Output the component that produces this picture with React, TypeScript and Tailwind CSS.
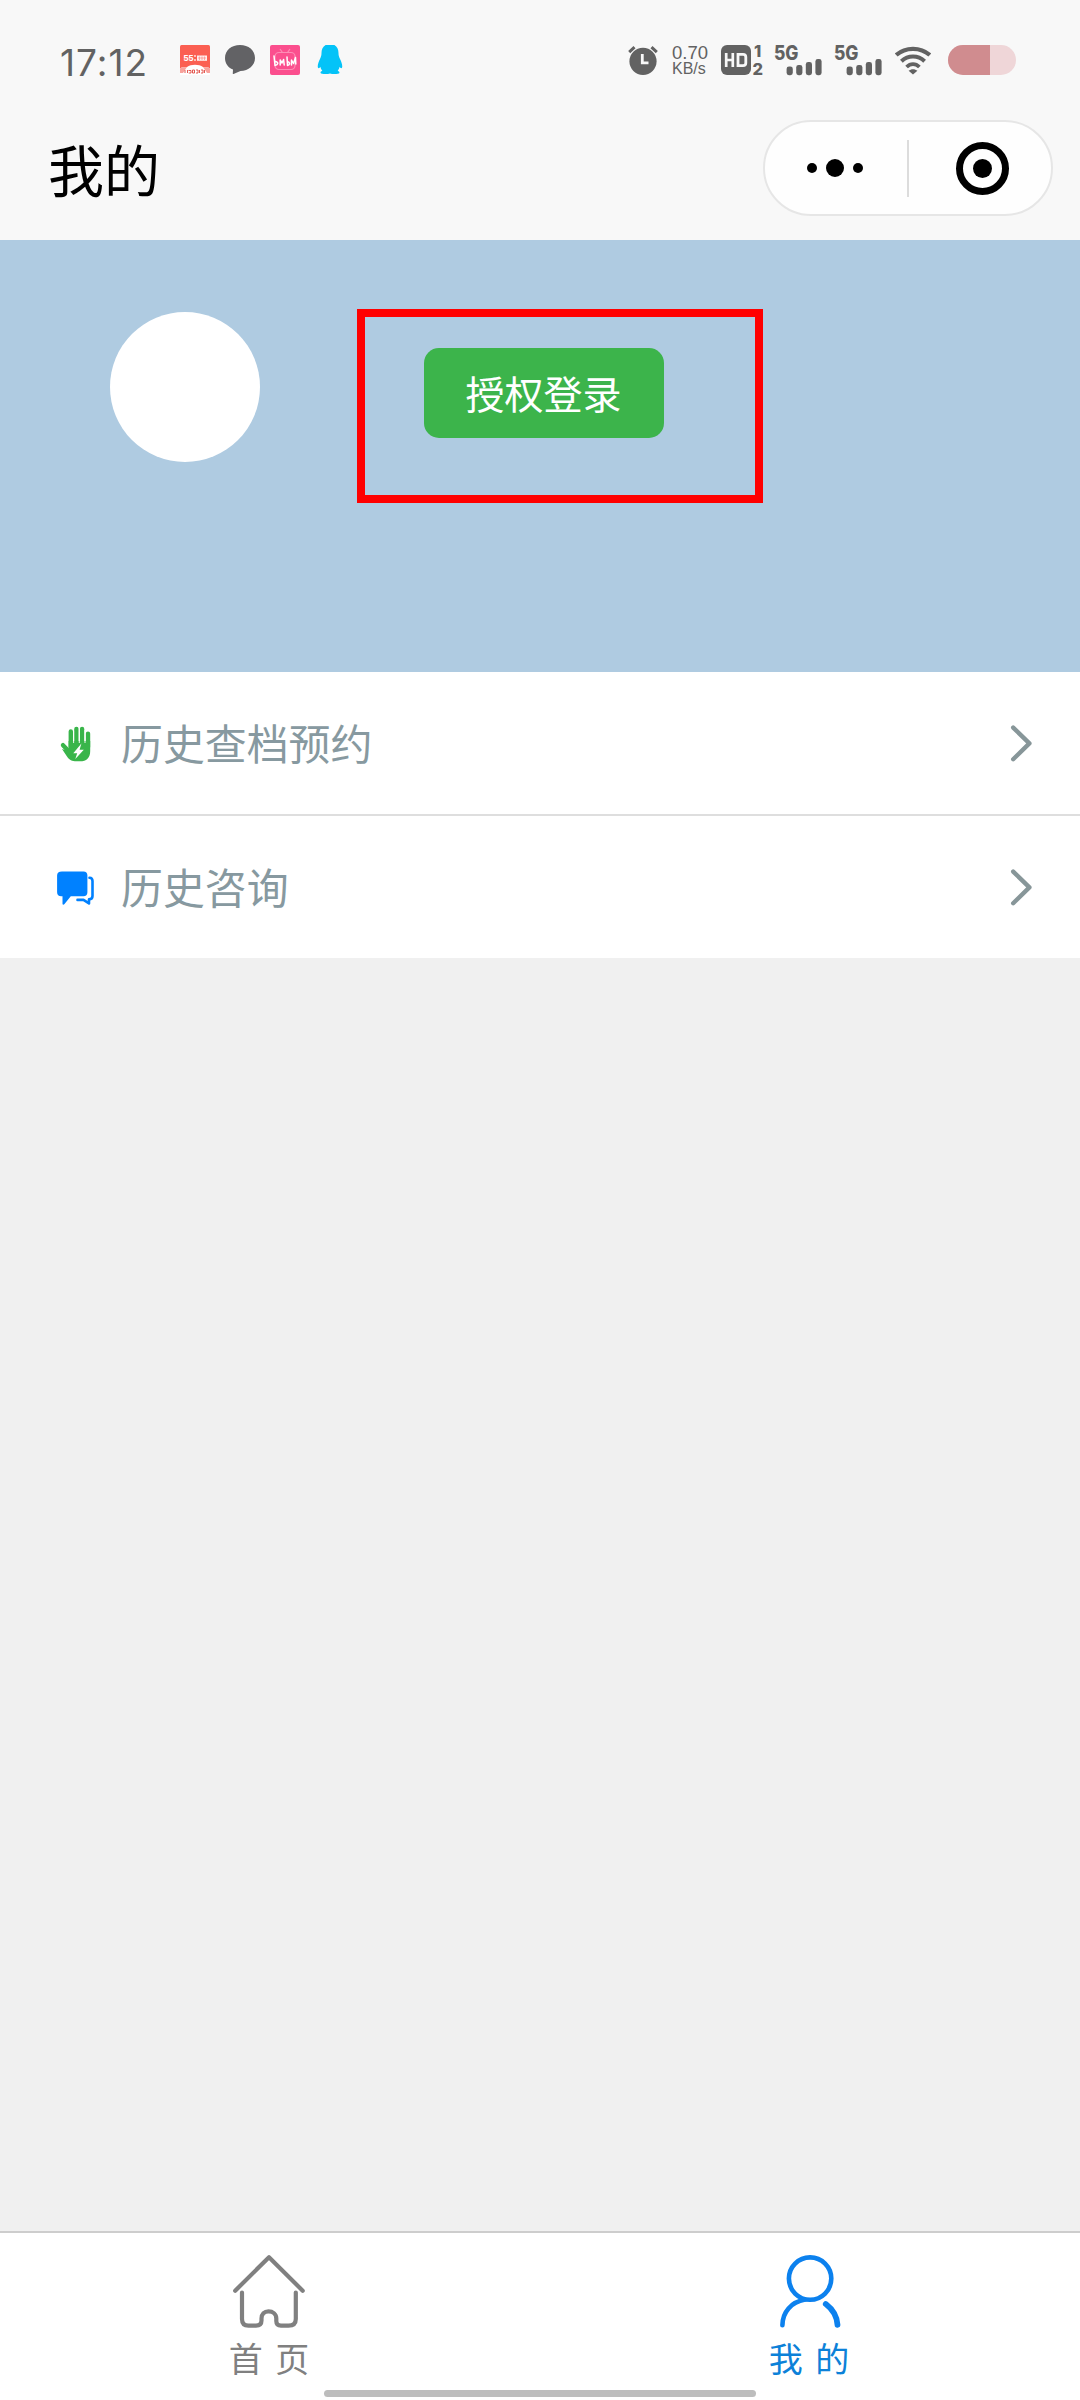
import React from 'react';

interface MenuItem {
  label: string;
  icon: React.ReactNode;
}

const HandIcon = () => (
  <svg width="40" height="40" viewBox="0 0 40 40" fill="none">
    <g stroke="#39b54a" strokeLinecap="round" strokeLinejoin="round">
      <path d="M14.8 8.5V24M20.4 6V22M26.1 6V22M32 10.6V24" strokeWidth="4.4" />
      <path d="M7 22.2L14 29.5" strokeWidth="4.4" />
    </g>
    <path d="M12.6 18H34.2V28C34.2 35 30.5 38.3 24 38.3H20.5C16 38.3 13.3 37 11 33.5L6 26L12.6 28Z" fill="#39b54a" />
    <path d="M17.6 8V20M23.3 6V20M29 7V20" stroke="#fff" strokeWidth="0.9" />
    <path d="M25.4 20.5L17.3 30.2H21.2L19.3 36L27.8 26.8H23.6Z" fill="#fff" />
  </svg>
);

const ChatIcon = () => (
  <svg width="40" height="40" viewBox="0 -1 40 40" fill="none">
    <path d="M6 3.5H27.5C30 3.5 31.4 5 31.4 7.2V24.2C31.4 26.8 30 28.3 27.5 28.3H14.8L8.3 36.2C7.5 37 6.5 36.8 6.5 35.8V28.3H5.2C2.6 28.3 1.1 26.8 1.1 24.2V7.6C1.1 5 2.6 3.5 6 3.5Z" fill="#0081ff" />
    <path d="M33.5 9.7C35.8 9.8 36.5 11 36.5 13V28C36.5 30 35.5 31.3 33 31.4V35.4L27.5 31.9H21.5" stroke="#0081ff" strokeWidth="2.6" strokeLinecap="round" strokeLinejoin="round" />
  </svg>
);

const HomeIcon = () => (
  <svg width="78" height="78" viewBox="0 0 78 78" fill="none" stroke="#808080" strokeLinecap="round" strokeLinejoin="round">
    <path d="M5.2 40.7L39 7.2L72.7 40.7" strokeWidth="4.2" />
    <path d="M12 42.5V69C12 73.5 14.3 75.6 18.5 75.6H26C29.5 75.6 31.5 73.7 31.5 70.5V68.5C31.5 64 34.3 61.3 38.5 61.3C42.7 61.3 46.3 64 46.3 68.5V71C46.3 74 48 75.6 51 75.6H58.5C63.3 75.6 65.8 73.2 65.8 69V42.5" strokeWidth="4.2" />
  </svg>
);

const UserIcon = () => (
  <svg width="78" height="78" viewBox="-1 0 78 78" fill="none" stroke="#0c81ee" strokeLinecap="round">
    <circle cx="39.1" cy="28.6" r="21.2" strokeWidth="4.6" />
    <path d="M11.4 75.2C11.6 62 20 52.2 34 49.6" strokeWidth="4.6" />
    <path d="M54.8 54C62 59.5 66 67 66.5 74.8" strokeWidth="5.8" />
  </svg>
);

const ChevronIcon = () => (
  <svg width="24" height="40" viewBox="0 -1 24 40" fill="none" stroke="#879699" strokeWidth="4.4" strokeLinecap="round" strokeLinejoin="round">
    <path d="M3.2 3.6L19.4 19.4L3.2 35.2" />
  </svg>
);

const NewsAppIcon = () => (
  <svg width="30" height="30" viewBox="0 0 30 30" className="mr-[15px]">
    <rect width="30" height="30" rx="1.5" fill="#fb5f52" />
    <path d="M0 24C2 21 5 23 7 22C11 19 19 19 23 22C25 23 28 21 30 24V30H0Z" fill="#fff" />
    <path d="M0 24C2 21 5 23 7 22L3 28H0ZM30 24C28 21 25 23 23 22L27 28H30Z" fill="#f9a29c" />
    <text x="3.5" y="16.3" fontSize="9" fontWeight="700" textLength="10" lengthAdjust="spacingAndGlyphs" fontFamily="Liberation Sans, sans-serif" fill="#fff">55</text>
    <path d="M15 10V12M15 14V16" stroke="#fff" strokeWidth="1.2" />
    <path d="M17 10.5H27V15.8H17Z" fill="#fff" opacity="0.9" />
    <path d="M18 13H26M19.5 11.5V15M22 11.5V15M24.5 11.5V15" stroke="#fb8a82" strokeWidth="0.7" />
    <path d="M5 28V25M7.5 28V25M8.5 25.5H11V28H8.7M12.5 25V28H14.5V25ZM16 25H18V28H16M19.5 25V28M21 25H23V28H21M24.5 25V28" stroke="#e04840" strokeWidth="0.9" fill="none" />
  </svg>
);

const BubbleIcon = () => (
  <svg width="30" height="30" viewBox="0 0 30 30" className="mr-[15px]">
    <path d="M15 0C23.5 0 30 5.2 30 13C30 20.5 23.5 25.7 15.5 26L8.5 29C7.8 29.2 7.6 28.8 7.8 28L8 24.5C3 22.5 0 18.5 0 13C0 5.2 6.5 0 15 0Z" fill="#626265" />
  </svg>
);

const VideoAppIcon = () => (
  <svg width="30" height="30" viewBox="0 0 30 30" className="mr-[17px]" fill="none">
    <rect width="30" height="30" rx="2" fill="#fb4f8e" />
    <path d="M10 4L12.5 7.5M20 4L17.5 7.5" stroke="#fd8db6" strokeWidth="1.2" />
    <rect x="5" y="7.5" width="20" height="17" rx="4" stroke="#fd8db6" strokeWidth="1.2" />
    <path d="M4 11L5 20.5C8 20 9 17.5 5.5 16.5M10.2 20V15L12 18L13.6 14.5L14.2 20M17 12L17.5 20.5C20 20 20.5 17.5 17.5 16.5M21.5 20V15L23.5 18.5L25.5 12.5L25.8 19" stroke="#fff" strokeWidth="1.5" strokeLinecap="round" strokeLinejoin="round" />
  </svg>
);

const PenguinIcon = () => (
  <svg width="26" height="30" viewBox="0 0 26 30">
    <path d="M13 -1C18.8 -1 21.5 3 21.5 8C21.5 10 21.8 11.5 23 14C24.5 17 25.8 20.5 25 22.7C24.4 23.8 23.2 22.8 22.6 21.8C22.2 23.5 21.7 24.5 20.7 25.7C22 26.3 22.6 27 22.4 28C22 29.3 15.5 29.5 13 28.4C10.5 29.5 4 29.3 3.6 28C3.4 27 4 26.3 5.3 25.7C4.3 24.5 3.8 23.5 3.4 21.8C2.8 22.8 1.6 23.8 1 22.7C.2 20.5 1.5 17 3 14C4.2 11.5 4.5 10 4.5 8C4.5 3 7.2 -1 13 -1Z" fill="#04c3f8" />
  </svg>
);

const AlarmIcon = () => (
  <svg width="30" height="30" viewBox="0 0 30 30" fill="none" className="mr-[14px]">
    <circle cx="15" cy="16.3" r="13.6" fill="#626262" />
    <path d="M1.2 7.2L6.5 2.2M28.8 7.2L23.5 2.2" stroke="#626262" strokeWidth="3" />
    <path d="M14.3 9V17.8H20.5" stroke="#f8f8f8" strokeWidth="2.8" />
  </svg>
);

const HdIcon = () => (
  <svg width="44" height="42" viewBox="0 -6 44 42" fill="none" className="-my-[6px] mr-[9px]">
    <rect width="30" height="30" rx="6" fill="#626262" />
    <path d="M5.2 8V22M11.8 8V22M5.2 15H11.8" stroke="#f8f8f8" strokeWidth="2.7" />
    <path d="M17 9.4H22C24 9.4 24.8 10.5 24.8 12V18C24.8 19.7 24 20.6 22 20.6H17Z" stroke="#f8f8f8" strokeWidth="2.8" />
    <text x="33" y="12.3" fontSize="16.5" fontWeight="800" fontFamily="Inter, sans-serif" fill="#626262">1</text>
    <text x="31.5" y="29.5" fontSize="16.5" fontWeight="800" fontFamily="Inter, sans-serif" fill="#626262">2</text>
  </svg>
);

const SignalIcon = ({ className }: { className: string }) => (
  <svg width="49" height="42" viewBox="0 -8 49 42" className={`-mt-[8px] -mb-[4px] ${className}`} fill="#626262">
    <text x="0" y="14.5" fontSize="19.5" fontWeight="800" fontFamily="Inter, sans-serif" textLength="24.5" lengthAdjust="spacingAndGlyphs">5G</text>
    <rect x="12.6" y="21.5" width="6.2" height="8.7" rx="2.4" />
    <rect x="22.2" y="20" width="6.2" height="10.2" rx="2.4" />
    <rect x="31.8" y="17" width="6.2" height="13.2" rx="2.4" />
    <rect x="41.4" y="14" width="6.2" height="16.2" rx="2.4" />
  </svg>
);

const WifiIcon = () => (
  <svg width="36" height="30" viewBox="0 0 36 30" fill="none" stroke="#626262" className="mr-[17px]">
    <path d="M1.2 10C10.5 1.7 25.5 1.7 34.8 10" strokeWidth="4.2" />
    <path d="M6.4 16.2C13 9.9 23 9.9 29.6 16.2" strokeWidth="4" />
    <path d="M11.6 22C15.5 18.2 20.5 18.2 24.4 22" strokeWidth="3.8" />
    <path d="M18 29.6L13.6 25.8C16 23.6 20 23.6 22.4 25.8Z" fill="#626262" stroke="none" />
  </svg>
);

const StatusBar = () => (
  <div className="flex h-[120px] items-start pt-[45px] pl-[60px] pr-[64px] text-[#626262]">
    <span className="w-[120px] font-['Inter'] text-[37px] leading-[35px] tracking-[1px]">17:12</span>
    <NewsAppIcon />
    <BubbleIcon />
    <VideoAppIcon />
    <PenguinIcon />
    <div className="ml-auto flex">
      <AlarmIcon />
      <div className="flex w-[49px] flex-col font-['Liberation_Sans'] whitespace-nowrap">
        <span className="text-[18.5px] leading-[15px]">0.70</span>
        <span className="text-[16px] leading-[18px]">KB/s</span>
      </div>
      <HdIcon />
      <SignalIcon className="mr-[11px]" />
      <SignalIcon className="mr-[12px]" />
      <WifiIcon />
      <div className="flex h-[30px] w-[68px] overflow-hidden rounded-full bg-[#efd6d8]">
        <div className="w-[42px] bg-[#d08c8f]" />
      </div>
    </div>
  </div>
);

const Capsule = () => (
  <div className="flex h-24 w-[290px] items-center rounded-full border-2 border-[#e6e6e6] bg-[#fefefe]">
    <div className="flex w-[142px] items-center justify-center gap-[9px] pr-[3px]">
      <span className="size-[10px] rounded-full bg-black" />
      <span className="size-[18px] rounded-full bg-black" />
      <span className="size-[10px] rounded-full bg-black" />
    </div>
    <div className="h-[57px] w-[2px] bg-[#dcdcdc]" />
    <div className="ml-[47px] flex size-[53px] items-center justify-center rounded-full border-[7px] border-black">
      <span className="size-[19px] rounded-full bg-black" />
    </div>
  </div>
);

const menuItems: MenuItem[] = [
  { label: '历史查档预约', icon: <HandIcon /> },
  { label: '历史咨询', icon: <ChatIcon /> },
];

export default function App() {
  return (
    <div className="relative flex h-[2400px] w-[1080px] flex-col bg-[#f0f0f0] font-['Noto_Sans_CJK_SC',sans-serif]">
      <header className="h-[240px] bg-[#f8f8f8]">
        <StatusBar />
        <div className="flex h-24 items-center justify-between pr-[27px] pl-12">
          <h1 className="pb-px text-[56px] leading-none text-black">我的</h1>
          <Capsule />
        </div>
      </header>

      {/* Profile */}
      <section className="flex h-[432px] items-start bg-[#afcbe1] pl-[110px]">
        <div className="mt-[72px] size-[150px] rounded-full bg-white" />
        <div className="mt-[69px] ml-[97px] flex h-[194px] w-[406px] items-start border-8 border-[#ff0000] pt-[31px] pl-[59px]">
          <button className="h-[90px] w-[240px] rounded-[15px] bg-[#3cb44b] pr-px pb-[2px] text-[39px] text-white">授权登录</button>
        </div>
      </section>

      <nav className="bg-white">
        {menuItems.map((item, idx) => (
          <a key={item.label} className={`flex items-center pr-[46px] pl-14 ${idx === 0 ? 'h-[144px] border-b-2 border-[#dedede]' : 'h-[142px]'}`}>
            {item.icon}
            <span className="ml-[25px] flex-1 pb-[2px] text-[41.9px] leading-[60px] text-[#8799a0]">{item.label}</span>
            <ChevronIcon />
          </a>
        ))}
      </nav>

      {/* Tab bar */}
      <footer className="mt-auto flex h-[169px] border-t-2 border-[#cdcdcd] bg-white">
        <div className="flex flex-1 flex-col items-center pt-[17px] pr-[2px] text-[#808080]">
          <HomeIcon />
          <span className="mt-[6px] text-[34px] leading-[48px] [word-spacing:5px]">首 页</span>
        </div>
        <div className="flex flex-1 flex-col items-center pt-[17px] pr-[2px] text-[#0c81d8]">
          <UserIcon />
          <span className="mt-[6px] text-[34px] leading-[48px] [word-spacing:5px]">我 的</span>
        </div>
      </footer>
      <div className="absolute bottom-[3px] left-[324px] h-[7px] w-[432px] rounded-full bg-[#bdbdbd]" />
    </div>
  );
}
